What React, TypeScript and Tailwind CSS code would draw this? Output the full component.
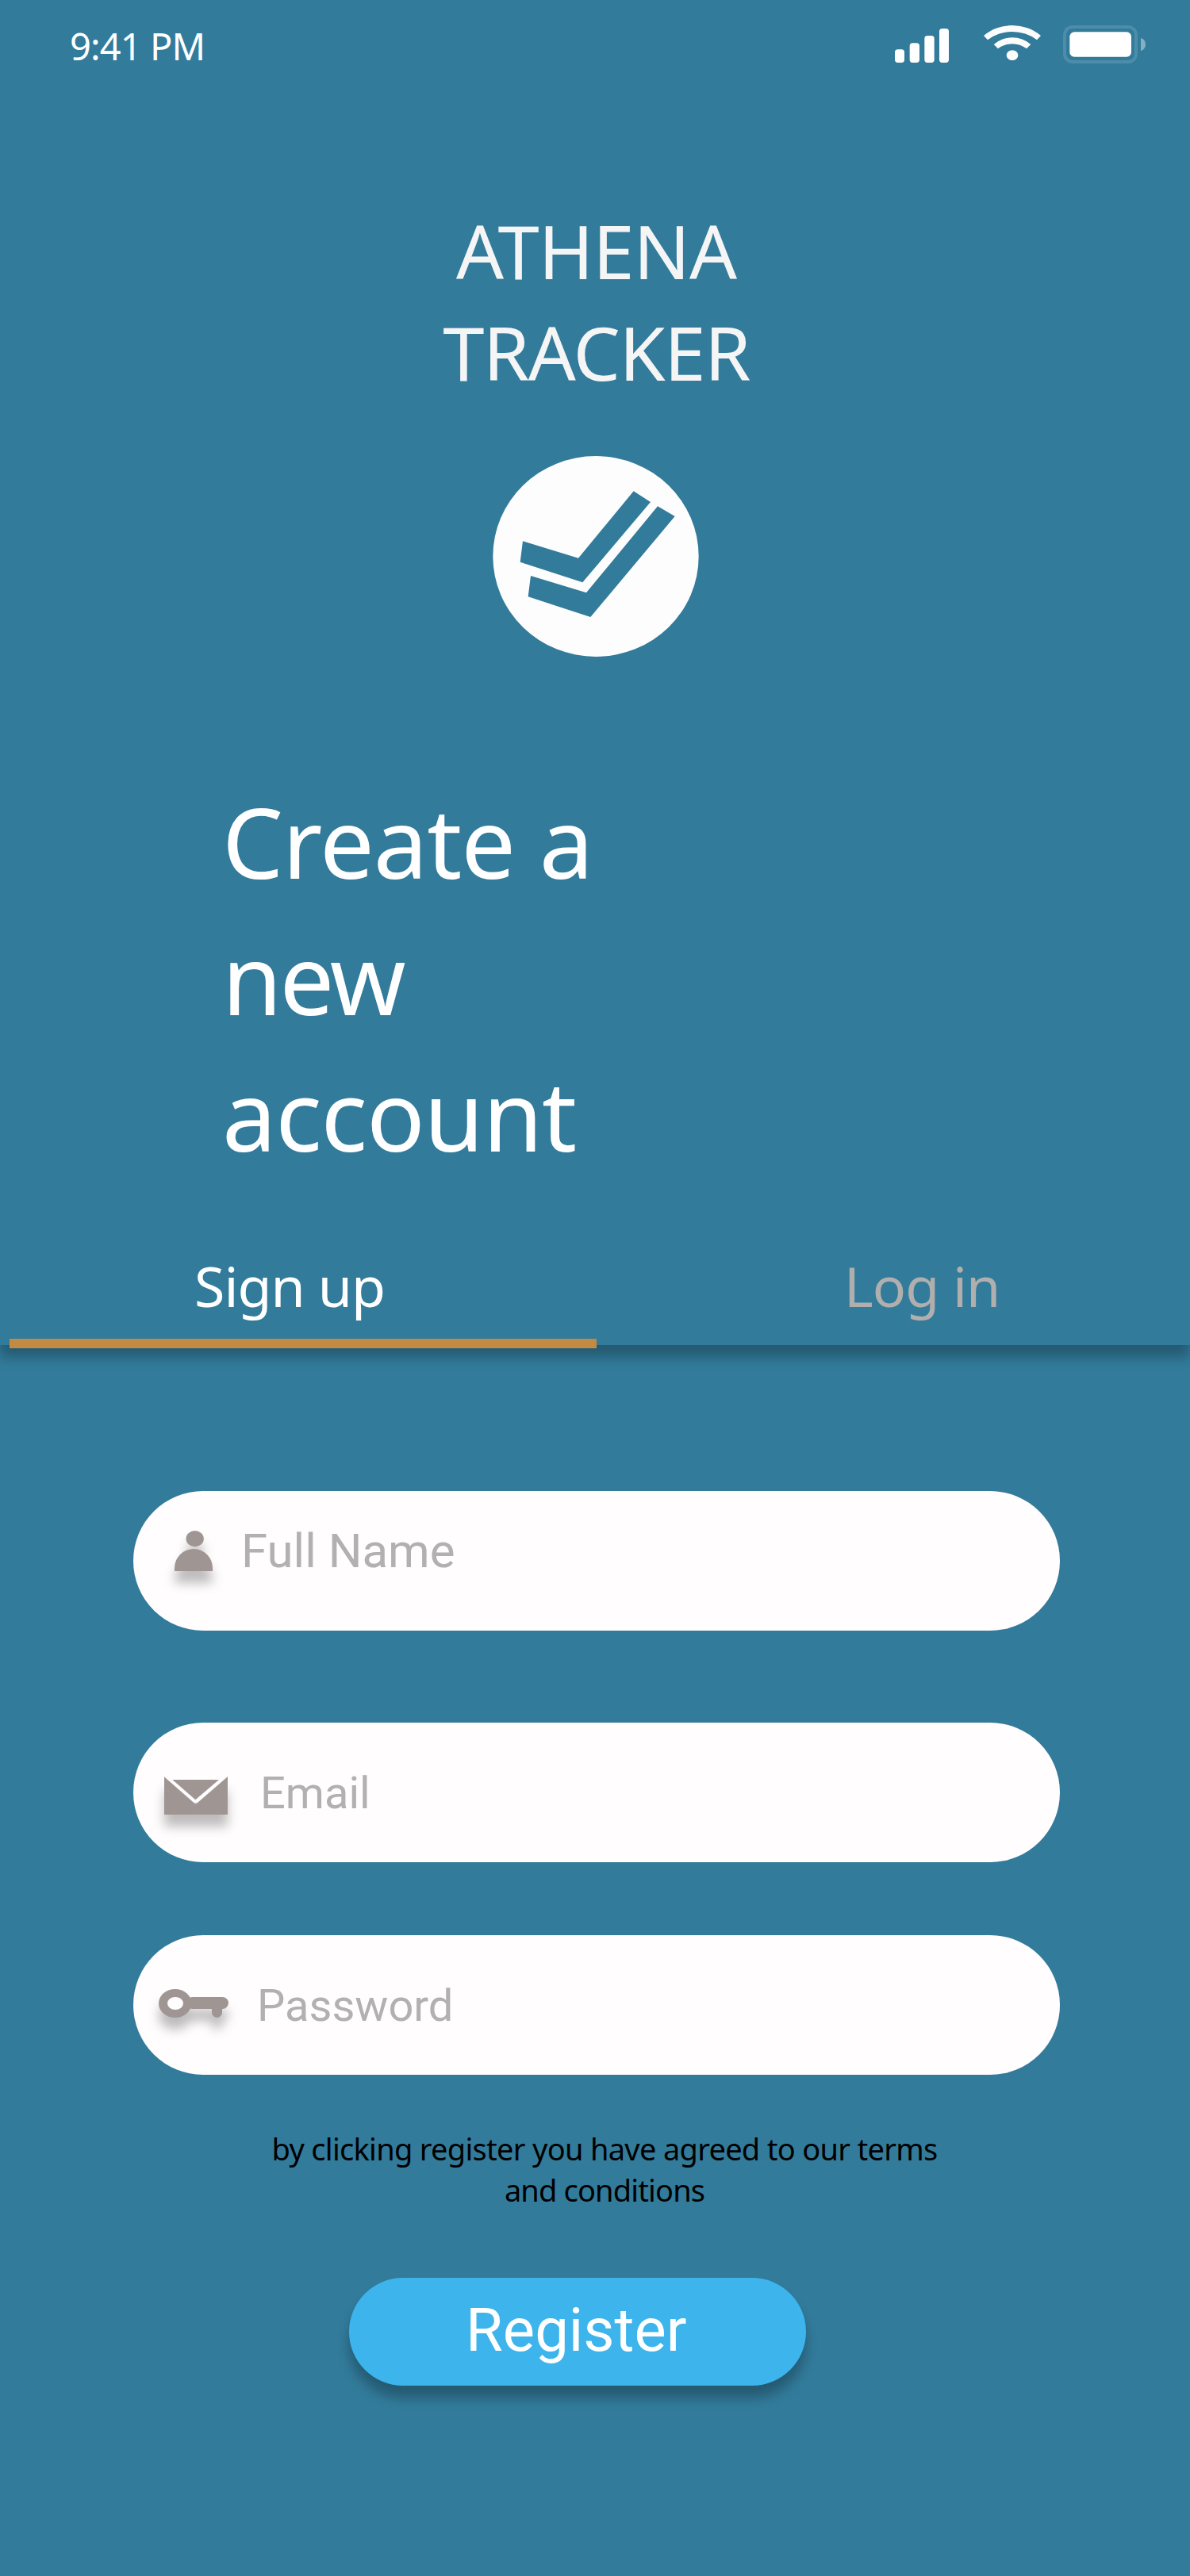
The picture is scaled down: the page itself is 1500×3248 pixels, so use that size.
import type { ReactNode } from "react";

function SignalIcon() {
  return (
    <svg className="h-[43px] w-[68px]" viewBox="84 108 204 129" fill="#ffffff" preserveAspectRatio="none">
      <rect x="84" y="187" width="36" height="50" rx="11" />
      <rect x="140" y="163" width="37" height="74" rx="11" />
      <rect x="196" y="135" width="37" height="102" rx="11" />
      <rect x="252" y="108" width="36" height="129" rx="11" />
    </svg>
  );
}

function WifiIcon() {
  return (
    <svg className="h-[44px] w-[72px]" viewBox="420 96 216 132" fill="#fcfcfd">
      <path d="M420 135A169 169 0 0 1 636 135L621 151A154 154 0 0 0 435 151Z" />
      <path d="M458 168A107 107 0 0 1 598 168L582 184A90 90 0 0 0 474 184Z" />
      <ellipse cx="528" cy="209" rx="22" ry="19.5" />
    </svg>
  );
}

function BatteryIcon() {
  return (
    <svg className="h-[48px] w-[104px]" viewBox="720 96 312 144">
      <rect x="726" y="102" width="270" height="132" rx="30" fill="none" stroke="#4d8da9" strokeWidth="12" />
      <rect x="745" y="121" width="233" height="94" rx="18" fill="#ffffff" />
      <path d="M1014 143Q1032 150 1032 168T1014 193Z" fill="#84b0c3" />
    </svg>
  );
}

function Logo() {
  return (
    <svg className="h-[253px] w-[260px]" viewBox="64 44 780 759">
      <ellipse cx="454" cy="423.5" rx="389" ry="379.5" fill="#fdfdfd" />
      <g fill="#327b9b">
        <path d="M178 366L388 430L597 177L661 218L404 522L168 445Z" />
        <path d="M208 497L418 561L688 234L753 272L434 653L198 576Z" />
      </g>
    </svg>
  );
}

function PersonIcon() {
  return (
    <svg className="h-[51px] w-[48px] overflow-visible drop-shadow-[0_15px_7px_rgba(0,0,0,0.26)]" viewBox="180 177 144 153" fill="#9f9694">
      <ellipse cx="257" cy="207.5" rx="33.5" ry="30.5" />
      <path d="M180 330V318A72 72 0 0 1 324 318V330Z" />
    </svg>
  );
}

function MailIcon() {
  return (
    <svg className="h-[48px] w-[80px] overflow-visible drop-shadow-[0_15px_7px_rgba(0,0,0,0.26)]" viewBox="141 240 240 144" fill="#9f9694">
      <path d="M150 252H372V340H150Z" fill="#fffdfe" />
      <path d="M141 241L260 345L381 240V384H141Z" />
      <path d="M172 252H348L259 328Z" />
    </svg>
  );
}

function KeyIcon() {
  return (
    <svg className="h-[36px] w-[88px] overflow-visible drop-shadow-[0_15px_7px_rgba(0,0,0,0.26)]" viewBox="120 234 264 108" fill="#9f9694">
      <ellipse cx="182" cy="288" rx="62" ry="54" />
      <rect x="225" y="264" width="159" height="45" rx="22.5" />
      <rect x="321" y="280" width="39" height="62" rx="19.5" />
      <ellipse cx="183" cy="288" rx="30" ry="24" fill="#fffdfe" />
    </svg>
  );
}

function Field({ className, children }: { className: string; children: ReactNode }) {
  return (
    <div className={`flex h-[176px] w-[1168px] items-center rounded-full bg-[#fffdfe] font-['Roboto',sans-serif] leading-none whitespace-nowrap text-[#b3b0b1] ${className}`}>
      {children}
    </div>
  );
}

export default function App() {
  return (
    <div className="flex h-[3248px] w-[1500px] flex-col overflow-hidden bg-[#327b9b] font-['Noto_Sans',sans-serif] whitespace-nowrap text-white">
      <header className="flex h-[1696px] shrink-0 flex-col shadow-[0_15px_15px_rgba(0,0,0,0.27)]">
        <div className="flex h-[120px] items-start pl-[88px]">
          <div className="mt-[26px] w-[1040px] text-[47px] leading-[64px] tracking-[-0.9px]">9:41 PM</div>
          <div className="mt-[36px]">
            <SignalIcon />
          </div>
          <div className="mt-[32px] ml-[44px]">
            <WifiIcon />
          </div>
          <div className="mt-[32px] ml-[28px]">
            <BatteryIcon />
          </div>
        </div>

        <h1 className="mt-[132px] pl-[3px] text-center text-[94px] leading-[128px] text-[#f5f5f6]">
          <span className="block tracking-[-1px]">ATHENA</span>
          <span className="block tracking-[-1.5px]">TRACKER</span>
        </h1>

        <div className="mt-[67px] flex justify-center pl-[2px]">
          <Logo />
        </div>

        <h2 className="mt-[147px] pl-[280px] text-[122px] leading-[172px]">
          <span className="block tracking-[-1px]">Create a</span>
          <span className="block tracking-[-3px]">new</span>
          <span className="block tracking-[-1.2px]">account</span>
        </h2>

        <nav className="mt-auto flex h-[123px] text-[70px] leading-[96px]">
          <div className="flex w-[752px] flex-col justify-between pl-[12px]">
            <span className="pl-[233px] tracking-[-1.05px]">Sign up</span>
            <div className="relative top-1 h-[12px] shrink-0 bg-[#c38a43]" />
          </div>
          <span className="pl-[312px] tracking-[-0.85px] text-[#b1aeae]">Log in</span>
        </nav>
      </header>

      <main className="flex flex-col items-start pt-[184px] pl-[168px]">
        <Field className="pb-[26px] pl-[52px] text-[60px]">
          <PersonIcon />
          <span className="ml-[36px] pt-[1px]">Full Name</span>
        </Field>
        <Field className="mt-[116px] pl-[39px] text-[56px]">
          <div className="pt-[8px]">
            <MailIcon />
          </div>
          <span className="ml-[41px] pt-[2px]">Email</span>
        </Field>
        <Field className="mt-[92px] pl-[32px] text-[56px]">
          <div className="pb-[4px]">
            <KeyIcon />
          </div>
          <span className="ml-[36px] pt-[2px]">Password</span>
        </Field>

        <p className="mt-[67px] ml-[154px] w-[880px] text-center text-[38px] leading-[52px] text-black">
          <span className="block tracking-[-0.7px]">by clicking register you have agreed to our terms</span>
          <span className="block tracking-[-0.85px]">and conditions</span>
        </p>

        <button className="mt-[85px] ml-[272px] flex h-[136px] w-[576px] items-center rounded-full bg-[#3db4ec] pb-[4px] pl-[147px] font-['Roboto',sans-serif] text-[76px] leading-none shadow-[0_15px_15px_rgba(0,0,0,0.27)]">
          Register
        </button>
      </main>
    </div>
  );
}
